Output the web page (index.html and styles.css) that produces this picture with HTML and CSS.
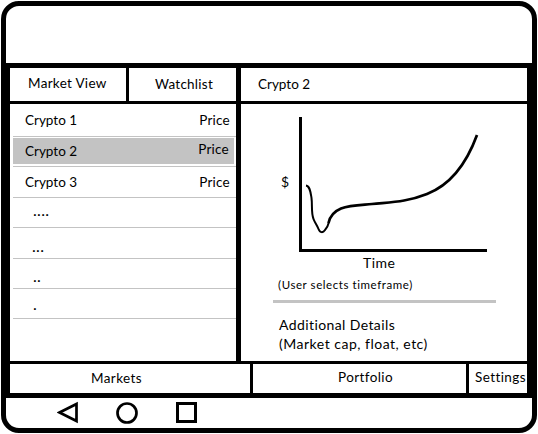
FILE: index.html
```html
<!DOCTYPE html>
<html lang="en">
<head>
<meta charset="utf-8">
<title>Market View</title>
<link rel="stylesheet" href="styles.css">
</head>
<body>
<div class="device">
  <header class="top"></header>
  <main class="screen">
    <div class="panels">
      <section class="market">
        <nav class="tabs">
          <div class="tab tab-market">Market View</div>
          <div class="tab tab-watch">Watchlist</div>
        </nav>
        <ul class="list">
          <li class="row r1"><span class="name">Crypto 1</span><span class="price">Price</span></li>
          <li class="row r2 selected"><span class="name">Crypto 2</span><span class="price">Price</span></li>
          <li class="row r3"><span class="name">Crypto 3</span><span class="price">Price</span></li>
          <li class="row r4 dots">....</li>
          <li class="row r5 dots">...</li>
          <li class="row r6 dots">..</li>
          <li class="row r7 dots">.</li>
        </ul>
      </section>
      <section class="detail">
        <h1 class="title">Crypto 2</h1>
        <div class="chart">
          <span class="dollar">$</span>
          <svg class="plot" width="188" height="136" viewBox="299 116 188 136" fill="none" stroke="#000">
            <path d="M300.500 117V250.500H487" stroke-width="3"/>
            <path d="M306 185.500C310 186 310.500 192 311.500 198C312.500 205 311 213 313.500 219C315 223 317 225 318.500 229C320 233 323 233 325 230C327 228 328 226 329 222" stroke-width="2"/>
            <path d="M328.500 223C330 216 335 211 341 208.500C350 205 361 205 372 204C391 202 407 202 427 194C450 185 466 165 477 135" stroke-width="2.700"/>
          </svg>
        </div>
        <div class="axis">Time</div>
        <div class="note">(User selects timeframe)</div>
        <hr class="rule">
        <div class="more"><span class="add">Additional Details</span><span class="cap">(Market cap, float, etc)</span></div>
      </section>
    </div>
    <nav class="bottom">
      <div class="item markets">Markets</div>
      <div class="item portfolio">Portfolio</div>
      <div class="item settings">Settings</div>
    </nav>
  </main>
  <footer class="keys">
    <svg width="142" height="24" viewBox="57 401 142 24" fill="none" stroke="#000" stroke-width="3">
      <path d="M59.500 412.500L76.500 404V421Z" stroke-width="2.700"/>
      <circle cx="127" cy="413" r="9.500" stroke-width="2.700"/>
      <rect x="177.500" y="403.500" width="18" height="18"/>
    </svg>
  </footer>
</div>
</body>
</html>
```
FILE: styles.css
```css
* { box-sizing: border-box; }
body { margin: 0; background: #fff; color: #000; font: 13.5px/20px Lato, "Liberation Sans", sans-serif; letter-spacing: .4px; white-space: nowrap; font-variant-ligatures: none; }
.device { width: 536px; height: 432px; margin: 1px; border: 5px solid #000; border-radius: 18px; display: flex; flex-direction: column; }
.top { height: 57px; }
.screen { height: 335px; border: solid #000; border-width: 5px 5px 5px 4px; display: flex; flex-direction: column; }
.panels { display: grid; grid-template-columns: 231px 286px; height: 293px; }
.market { border-right: 5px solid #000; }
.tabs { display: grid; grid-template-columns: 119px 107px; height: 36px; border-bottom: 3px solid #000; }
.tab-market { border-right: 3px solid #000; padding: 5px 0 0 18px; letter-spacing: .3px; }
.tab-watch { padding: 6px 0 0 26px; letter-spacing: .25px; }
.list { list-style: none; margin: 0; padding: 0 0 0 3px; }
.row { display: flex; justify-content: space-between; border-bottom: 1px solid #c3c3c3; padding: 0 6px 0 12px; }
.name { letter-spacing: 0; }
.price { letter-spacing: .25px; }
.r1 { height: 33px; padding-top: 6px; }
.r2 { height: 30px; padding-top: 4px; background: linear-gradient(#c3c3c3, #c3c3c3) 0 1px / 221px 26px no-repeat; }
.r2 .price { margin: -2px 1px 0 0; }
.r3 { height: 31px; padding-top: 5px; }
.r4 { height: 30px; }
.r5 { height: 31px; }
.r6 { height: 30px; }
.r7 { height: 30px; }
.dots { padding: 2px 0 0 20px; justify-content: flex-start; font-size: 16px; letter-spacing: .3px; }
.r5 { padding: 8px 0 0 19px; }
.r6 { padding-top: 7px; }
.r7 { padding-top: 5px; }
.title { height: 36px; margin: 0; border-bottom: 3px solid #000; font-size: inherit; font-weight: 400; letter-spacing: 0; padding: 6px 0 0 17px; }
.chart { display: flex; padding: 12px 0 0 40px; height: 148px; }
.dollar { width: 18px; padding-top: 56px; font-size: 14px; }
.axis { height: 23px; padding: 1px 0 0 122px; font-size: 14px; letter-spacing: .5px; }
.note { height: 25px; padding-left: 37px; font-size: 11.5px; letter-spacing: .57px; }
.rule { width: 223px; height: 3px; margin: 0 0 0 32px; border: 0; background: #c3c3c3; }
.more { display: flex; flex-direction: column; align-items: flex-start; padding: 12px 0 0 38px; font-size: 14px; line-height: 19px; }
.cap { letter-spacing: .5px; }
.bottom { display: grid; grid-template-columns: 240px 216px 61px; height: 32px; border-top: 3px solid #000; }
.item { padding-top: 3px; }
.portfolio, .settings { border-left: 3px solid #000; }
.markets { padding: 4px 0 0 81px; }
.portfolio { padding-left: 85px; }
.settings { padding-left: 6px; }
.keys { height: 30px; padding: 3px 0 0 51px; }
.keys svg { display: block; }
```
